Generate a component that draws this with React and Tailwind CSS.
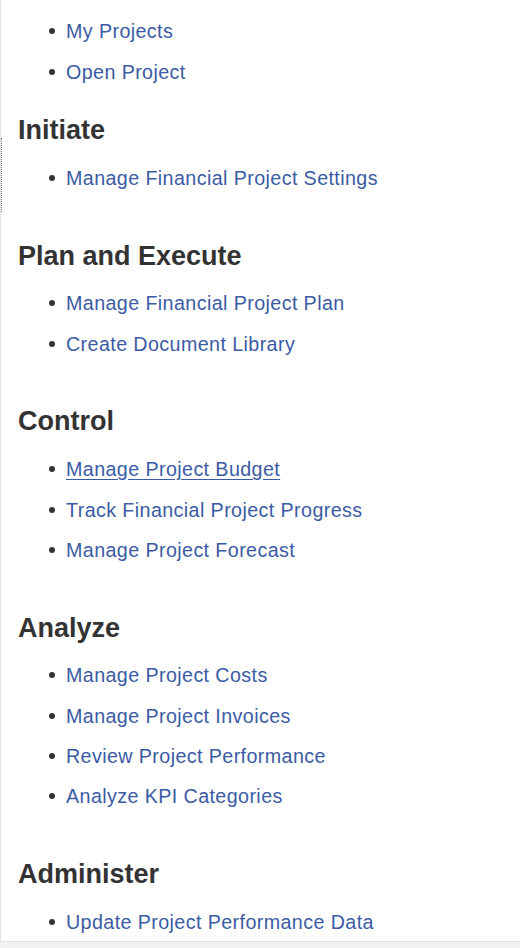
import React from 'react';

const sections = [
  { title: null, items: ['My Projects', 'Open Project'] },
  { title: 'Initiate', items: ['Manage Financial Project Settings'] },
  { title: 'Plan and Execute', items: ['Manage Financial Project Plan', 'Create Document Library'] },
  { title: 'Control', items: ['Manage Project Budget', 'Track Financial Project Progress', 'Manage Project Forecast'] },
  { title: 'Analyze', items: ['Manage Project Costs', 'Manage Project Invoices', 'Review Project Performance', 'Analyze KPI Categories'] },
  { title: 'Administer', items: ['Update Project Performance Data'] },
];

export default function App() {
  return (
    <div className="min-h-screen bg-[#f1f1f1]" style={{ fontFamily: '"Liberation Sans", Arial, sans-serif' }}>
      <div className="relative h-[942px] overflow-hidden bg-white border-l border-b border-[#dfe3e8] pl-[17px] pt-[11px]">
        {/* dotted marker on the left edge */}
        <div className="absolute left-0 top-[138px] h-[74px] border-l border-dotted border-[#777]" />
        {sections.map((s, i) => (
          <div key={i} className={s.title && i > 1 ? 'mt-[41.5px]' : s.title ? 'mt-[22.5px]' : ''}>
            {s.title && (
              <h2 className="text-[27px] leading-[32px] font-bold text-[#333] mb-[11.5px]">{s.title}</h2>
            )}
            <ul>
              {s.items.map((item) => (
                <li key={item} className="flex items-center h-[40.4px] pl-[31px]">
                  <span className="w-[6px] h-[6px] rounded-full bg-[#333] mr-[11px] shrink-0" />
                  <a
                    href="#"
                    className={`text-[19.7px] leading-[24px] tracking-[0.4px] text-[#3b5ba4] ${item === 'Manage Project Budget' ? 'underline underline-offset-[3px]' : ''}`}
                  >
                    {item}
                  </a>
                </li>
              ))}
            </ul>
          </div>
        ))}
      </div>
    </div>
  );
}
